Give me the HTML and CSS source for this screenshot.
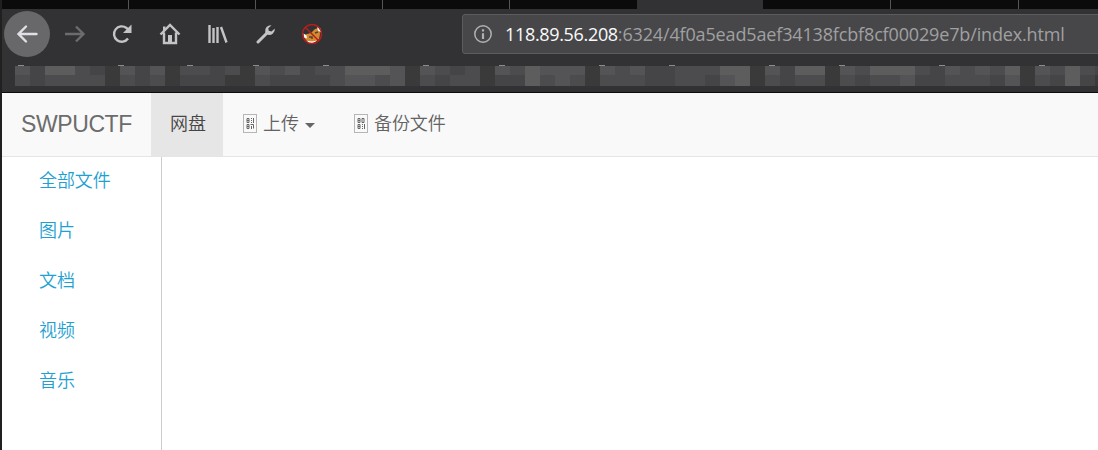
FILE: index.html
```
<!DOCTYPE html>
<html lang="zh-CN">
<head>
<meta charset="utf-8">
<title>SWPUCTF</title>
<link rel="stylesheet" href="styles.css">
</head>
<body>
<div class="window">
  <header class="browser">
    <div class="tabs"><i></i><i></i><i></i><i></i><i></i><i class="current"></i><i></i><i></i><i></i></div>
    <div class="toolbar">
      <span class="back"><svg width="22" height="20" viewBox="0 0 22 20"><path d="M20.500 10H3M10 2.500L2.500 10l7.500 7.500"/></svg></span>
      <svg class="forward" width="22" height="20" viewBox="0 0 22 20"><path d="M1 10h18M12 2.500l7.500 7.500-7.500 7.500"/></svg>
      <svg class="reload" width="20" height="20" viewBox="0 0 20 20"><path d="M16 14.500A7.700 7.700 0 1 1 14.500 4L17 6.500"/><path class="solid" d="M19.500 .5v8.500h-8.500z"/></svg>
      <svg class="home" width="22" height="22" viewBox="0 0 22 22"><path d="M1.500 11.500L11 2l9.500 9.500M5 9.500v10.500h12V9.500"/><path class="solid" d="M4 3.500h2.500V7L4 8.500zM9 12h4v8H9z"/></svg>
      <svg class="library" width="20" height="20" viewBox="0 0 20 20"><path d="M1.500 1v18M5.500 4v15M9.500 3v16M13 3l5.500 15.500"/></svg>
      <svg class="wrench" width="20" height="20" viewBox="0 0 20 20"><path d="M2 18l9.500-9.500"/><path class="solid" d="M15.500 1.200A5.800 5.800 0 0 0 9.200 8.200L11.800 10.800A5.800 5.800 0 0 0 18.800 4.500L15.500 7.500 12.700 6.700 12.300 4.300z"/></svg>
      <svg class="fox" width="22" height="22" viewBox="0 0 22 22"><path class="face" d="M3 12l3-1 4-1 4-4 4-1 1 6-1 5-4 3H8l-4-3z"/><path class="ear" d="M2.500 10.500l3 2 .5 3-3-1zM16 4l3.500 1.500.5 4-3-2zM5 17.500l6 1 5-1-4 2.500H8z"/><path class="eye" d="M8 14h3v2M14 10l3-1"/><circle cx="11" cy="11" r="9.500"/><path class="ban" d="M4 4l14 14"/></svg>
      <div class="address">
        <svg class="info" width="18" height="18" viewBox="0 0 18 18"><circle cx="9" cy="9" r="8.200"/><path d="M9 8.200v5.800M9 4.200v2.300"/></svg>
        <span class="url"><b>118.89.56.208</b><span>:6324/4f0a5ead5aef34138fcbf8cf00029e7b/index.html</span></span>
      </div>
    </div>
    <div class="bookmarks" id="bookmarks"></div>
  </header>
  <nav class="navbar">
    <a class="brand">SWPUCTF</a>
    <a class="item active">网盘</a>
    <a class="item upload"><svg class="glyph" width="14" height="19" viewBox="0 0 14 19"><rect x=".5" y=".5" width="13" height="18"/><path d="M4 4.500h2v4h-2zM4 6.500h2M8.500 4v1M8.500 6v1M8.500 8v1M10.500 4v5M4 10.500h2v4h-2zM4 12.500h2M7.500 10.500h3v4M8.500 12v3"/></svg><span>上传</span><i class="caret"></i></a>
    <a class="item backup"><svg class="glyph" width="14" height="19" viewBox="0 0 14 19"><rect x=".5" y=".5" width="13" height="18"/><path d="M4 4.500h2v4h-2zM4 6.500h2M8 4.500h2v4h-2zM4 10.500h2v4h-2zM4 12.500h2M8.500 10v1M8.500 12v1M8.500 14v1M10.500 10v5"/></svg><span>备份文件</span></a>
  </nav>
  <main class="content">
    <aside class="sidebar"><a>全部文件</a><a>图片</a><a>文档</a><a>视频</a><a>音乐</a></aside>
    <section></section>
  </main>
</div>
<script src="bookmarks.js"></script>
</body>
</html>
```
FILE: styles.css
```
body { margin: 0; background: #fff; font-family: "Liberation Sans", "Noto Sans CJK SC", sans-serif; font-weight: 350; }
.window { box-sizing: border-box; width: 1098px; height: 450px; border-left: 2px solid #202021; overflow: hidden; display: flex; flex-direction: column; }
.browser { height: 93px; box-sizing: border-box; background: #323234; border-bottom: 1px solid #0c0c0d; flex: none; }
.tabs { height: 9px; display: flex; background: #0b0b0b; }
.tabs i { width: 127px; box-sizing: border-box; border-right: 1px solid #555; flex: none; }
.tabs i:nth-child(5) { border: 0; }
.tabs .current { width: 126px; background: #323234; border: 0; }
.tabs i:nth-child(7), .tabs i:nth-child(8) { width: 128px; }
.toolbar { height: 49px; padding-bottom: 2px; display: flex; align-items: center; }
.toolbar svg { fill: none; stroke: #c4c4c6; stroke-width: 2.4; flex: none; }
.toolbar .solid { fill: #c4c4c6; stroke: none; }
.back { width: 46px; height: 46px; margin-left: 2px; border-radius: 50%; background: #68686a; display: flex; align-items: center; justify-content: center; flex: none; }
.toolbar .back svg { stroke: #e0e0e4; stroke-linecap: round; }
.toolbar .forward { stroke: #6c6c6e; margin-left: 14px; }
.reload { margin-left: 26px; }
.home { margin-left: 27px; }
.library { margin-left: 27px; }
.wrench { margin-left: 28px; }
.toolbar .wrench { stroke-width: 3; stroke-linecap: round; }
.fox { margin-left: 25px; }
.toolbar .fox { stroke: #b5201e; stroke-width: 1.5; }
.fox .face { fill: #d58a2c; stroke: none; }
.fox .ear { fill: #fff; stroke: none; }
.fox .eye { stroke: #4c4540; }
.address { box-sizing: border-box; height: 40px; width: 660px; margin-left: 139px; flex: none; background: #474749; border: 1px solid #5c5c5e; border-radius: 3px; display: flex; align-items: center; padding-left: 11px; }
.toolbar .info { stroke: #b1b1b3; stroke-width: 1.5; }
.info path { stroke-width: 2.2; }
.url { margin-left: 13px; font: 18px "Open Sans", sans-serif; color: #a0a0a2; white-space: nowrap; display: flex; }
.url b { font-weight: 400; color: #fafafa; letter-spacing: -.33px; }
.url span { letter-spacing: -.15px; }
.bookmarks { margin: 5px 0 0 13px; display: grid; grid-template-columns: repeat(73, 15px); grid-template-rows: 1px 9px 11px; }
.tick { grid-row: 1; width: 6px; background: #8c8c8d; }
.a { background: #3a3a3b; } .b { background: #454547; } .c { background: #4c4c4e; } .d { background: #545456; } .e { background: #5d5d5e; }
.navbar { height: 64px; box-sizing: border-box; flex: none; background: #f9f9f9; border-bottom: 1px solid #e5e5e5; display: flex; color: #636363; }
.brand { width: 149px; box-sizing: border-box; padding-left: 19px; font-size: 23px; line-height: 62px; letter-spacing: -.4px; color: #6c6c6c; }
.item { display: flex; align-items: center; font-size: 18px; height: 63px; line-height: 61px; padding: 0 0 0 19px; box-sizing: border-box; white-space: nowrap; letter-spacing: -.1px; }
.active { background: #e6e6e6; width: 72px; color: #454545; }
.upload { width: 112px; padding-left: 20px; }
.glyph { fill: none; stroke: #666; stroke-width: 1; margin: 0 6px 3px 0; }
.glyph rect { stroke: #b6b6b6; }
.caret { border: 5px solid transparent; border-top-color: #666; border-bottom: 0; margin: 2px 0 0 6px; }
.content { flex: 1; display: flex; }
.sidebar { width: 160px; box-sizing: border-box; border-right: 1px solid #ccc; display: flex; flex-direction: column; }
.sidebar a { height: 50.1px; line-height: 48px; flex: none; padding-left: 37px; color: #1ea1d2; font-size: 18px; letter-spacing: -.1px; }
```
FILE: bookmarks.js
```
// Shade of each bookmark tile, one letter per 15px column.
const rows = [
  'dbeecba' + 'dbda' + 'ccbca' + 'dcdbcceeeda' + 'dcbca' + 'dceddda' + 'dcdbbccceea' + 'dbeea' + 'dceeecbdcdcea' + 'dcecb',
  'cbcccca' + 'cbca' + 'bbbaa' + 'cbbbbcddcda' + 'cbcca' + 'bbecdca' + 'cccbbccbdea' + 'cbcca' + 'cbccdbbcccbda' + 'cbeba'
];
const bar = document.getElementById('bookmarks');
rows.forEach((row, r) => [...row].forEach((shade, c) => {
  const tile = document.createElement('i');
  tile.className = shade;
  tile.style.gridArea = `${r + 2} / ${c + 1}`;
  bar.append(tile);
}));
[18, 118, 187, 253, 323, 423, 499, 599, 669, 769, 839, 939, 1039].forEach(x => {
  const tick = document.createElement('i');
  const column = Math.floor((x - 15) / 15);
  tick.className = 'tick';
  tick.style.gridColumn = column + 1;
  tick.style.marginLeft = `${x - 15 - column * 15}px`;
  bar.append(tick);
});
```
